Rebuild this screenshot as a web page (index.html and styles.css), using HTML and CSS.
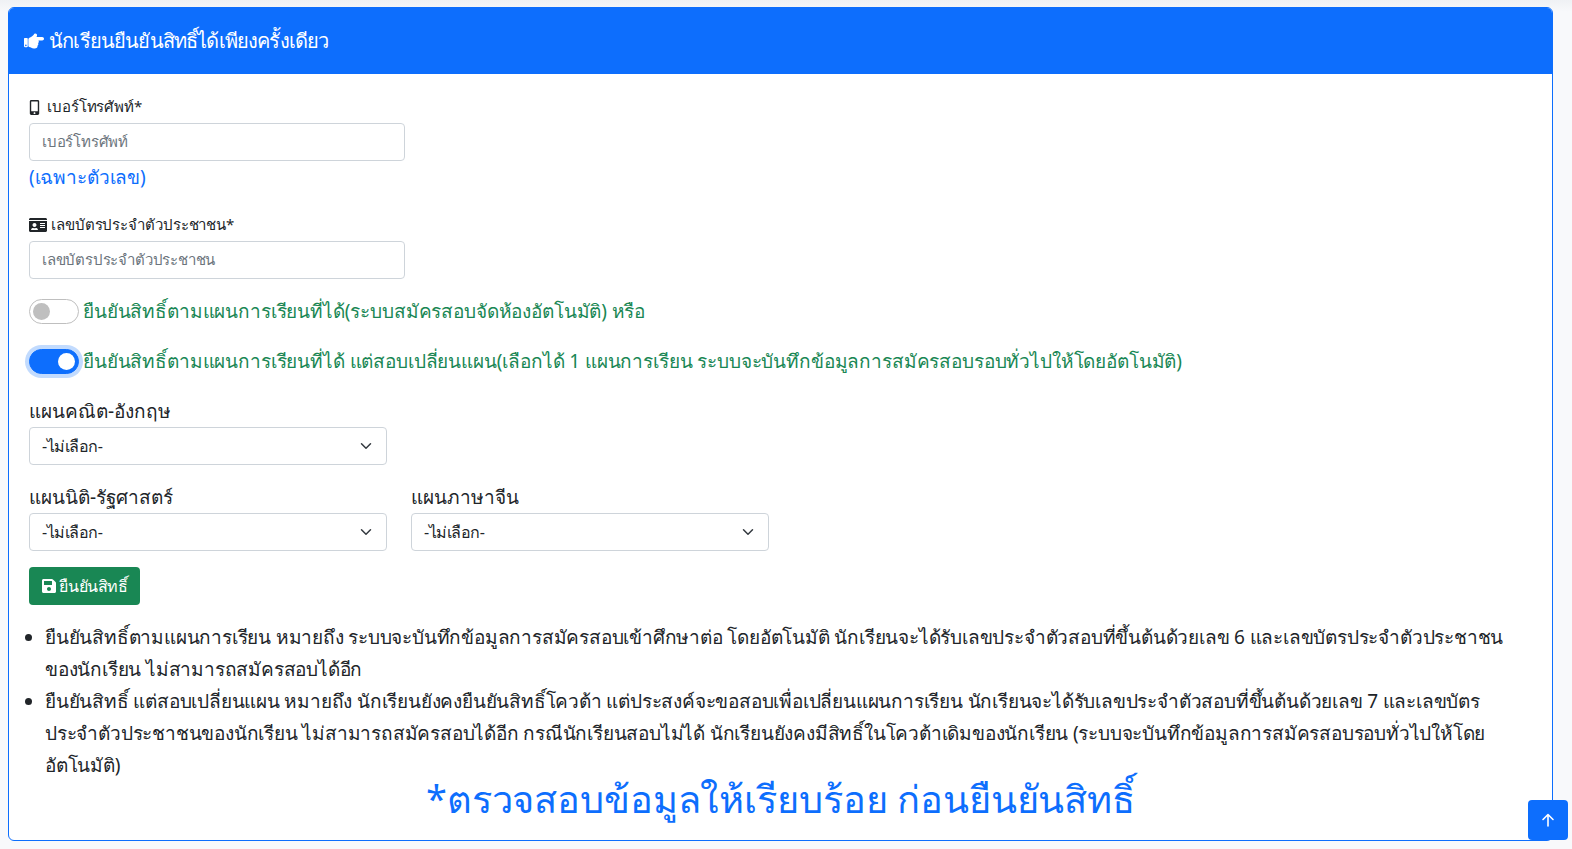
FILE: index.html
```html
<!DOCTYPE html>
<html lang="th">
<head>
<meta charset="utf-8">
<title>ยืนยันสิทธิ์</title>
<link rel="stylesheet" href="styles.css">
</head>
<body>
<div class="card">
  <div class="card-header">
    <svg class="ic-hand" viewBox="0 0 512 512"><path fill="currentColor" d="M512 199.652c0 23.625-20.65 43.826-44.8 43.826h-99.851c16.34 17.048 18.346 49.766-6.299 70.944 14.288 22.829 2.147 53.017-16.45 62.315C353.574 425.878 322.654 448 272 448c-2.746 0-13.276-.203-16-.195-61.971.168-76.894-31.065-123.731-38.315C120.596 407.683 112 397.599 112 385.786V214.261l.002-.001c.011-18.366 10.607-35.889 28.464-43.845 28.886-12.994 95.413-49.038 107.534-77.323 7.797-18.194 21.384-29.084 40-29.092 34.222-.014 57.752 35.098 44.119 66.908-3.583 8.359-8.312 16.67-14.153 24.918H467.2c23.624 0 44.8 20.976 44.8 43.826zM96 200v192c0 13.255-10.745 24-24 24H24c-13.255 0-24-10.745-24-24V200c0-13.255 10.745-24 24-24h48c13.255 0 24 10.745 24 24zM68 368c0-11.046-8.954-20-20-20s-20 8.954-20 20 8.954 20 20 20 20-8.954 20-20z"/></svg>
    <span>นักเรียนยืนยันสิทธิ์ได้เพียงครั้งเดียว</span>
  </div>
  <div class="card-body">
    <form class="form">
      <div class="field">
        <label class="label label-phone">
          <svg class="ic-phone" viewBox="0 0 320 512"><path fill="currentColor" d="M272 0H48C21.5 0 0 21.5 0 48v416c0 26.5 21.5 48 48 48h224c26.5 0 48-21.5 48-48V48c0-26.5-21.5-48-48-48zM160 480c-17.7 0-32-14.3-32-32s14.3-32 32-32 32 14.3 32 32-14.3 32-32 32zm112-108c0 6.6-5.4 12-12 12H60c-6.6 0-12-5.4-12-12V60c0-6.6 5.4-12 12-12h200c6.6 0 12 5.4 12 12v312z"/></svg>
          เบอร์โทรศัพท์*
        </label>
        <input class="control" type="text" placeholder="เบอร์โทรศัพท์">
        <div class="hint">(เฉพาะตัวเลข)</div>
      </div>
      <div class="field field-id">
        <label class="label">
          <svg class="ic-id" viewBox="0 0 576 512"><path fill="currentColor" d="M528 32H48C21.5 32 0 53.5 0 80v16h576V80c0-26.5-21.5-48-48-48zM0 432c0 26.5 21.5 48 48 48h480c26.5 0 48-21.5 48-48V128H0v304zm352-232c0-4.4 3.6-8 8-8h144c4.4 0 8 3.6 8 8v16c0 4.4-3.6 8-8 8H360c-4.4 0-8-3.6-8-8v-16zm0 64c0-4.4 3.6-8 8-8h144c4.4 0 8 3.6 8 8v16c0 4.4-3.6 8-8 8H360c-4.4 0-8-3.6-8-8v-16zm0 64c0-4.4 3.6-8 8-8h144c4.4 0 8 3.6 8 8v16c0 4.4-3.6 8-8 8H360c-4.4 0-8-3.6-8-8v-16zM176 192c35.3 0 64 28.7 64 64s-28.7 64-64 64-64-28.7-64-64 28.7-64 64-64zM67.1 396.2C75.5 370.5 99.6 352 128 352h8.2c12.3 5.1 25.7 8 39.8 8s27.6-2.9 39.8-8h8.2c28.4 0 52.5 18.5 60.9 44.2 3.2 9.9-5.2 19.8-15.6 19.8H82.7c-10.4 0-18.8-10-15.6-19.8z"/></svg>
          เลขบัตรประจำตัวประชาชน*
        </label>
        <input class="control" type="text" placeholder="เลขบัตรประจำตัวประชาชน">
      </div>
      <div class="switches">
        <div class="switch-row">
          <span class="switch"></span>
          <span class="switch-text">ยืนยันสิทธิ์ตามแผนการเรียนที่ได้(ระบบสมัครสอบจัดห้องอัตโนมัติ) หรือ</span>
        </div>
        <div class="switch-row">
          <span class="switch switch-on"></span>
          <span class="switch-text">ยืนยันสิทธิ์ตามแผนการเรียนที่ได้ แต่สอบเปลี่ยนแผน(เลือกได้ 1 แผนการเรียน ระบบจะบันทึกข้อมูลการสมัครสอบรอบทั่วไปให้โดยอัตโนมัติ)</span>
        </div>
      </div>
      <div class="plan-row">
        <div class="plan">
          <div class="plan-label">แผนคณิต-อังกฤษ</div>
          <div class="select">-ไม่เลือก-<svg class="chev" viewBox="0 0 16 16"><path fill="none" stroke="#343a40" stroke-linecap="round" stroke-linejoin="round" stroke-width="2" d="m2 5 6 6 6-6"/></svg></div>
        </div>
      </div>
      <div class="plan-row">
        <div class="plan">
          <div class="plan-label">แผนนิติ-รัฐศาสตร์</div>
          <div class="select">-ไม่เลือก-<svg class="chev" viewBox="0 0 16 16"><path fill="none" stroke="#343a40" stroke-linecap="round" stroke-linejoin="round" stroke-width="2" d="m2 5 6 6 6-6"/></svg></div>
        </div>
        <div class="plan">
          <div class="plan-label">แผนภาษาจีน</div>
          <div class="select">-ไม่เลือก-<svg class="chev" viewBox="0 0 16 16"><path fill="none" stroke="#343a40" stroke-linecap="round" stroke-linejoin="round" stroke-width="2" d="m2 5 6 6 6-6"/></svg></div>
        </div>
      </div>
      <div class="btn">
        <svg class="ic-save" viewBox="0 0 448 512"><path fill="currentColor" d="M433.941 129.941l-83.882-83.882A48 48 0 0 0 316.118 32H48C21.49 32 0 53.49 0 80v352c0 26.51 21.49 48 48 48h352c26.51 0 48-21.49 48-48V163.882a48 48 0 0 0-14.059-33.941zM224 416c-35.346 0-64-28.654-64-64 0-35.346 28.654-64 64-64s64 28.654 64 64c0 35.346-28.654 64-64 64zm96-304.52V212c0 6.627-5.373 12-12 12H76c-6.627 0-12-5.373-12-12V108c0-6.627 5.373-12 12-12h228.52c3.183 0 6.235 1.264 8.485 3.515l3.48 3.48A11.996 11.996 0 0 1 320 111.48z"/></svg>
        ยืนยันสิทธิ์
      </div>
    </form>
    <ul class="notes">
      <li>ยืนยันสิทธิ์ตามแผนการเรียน หมายถึง ระบบจะบันทึกข้อมูลการสมัครสอบเข้าศึกษาต่อ โดยอัตโนมัติ นักเรียนจะได้รับเลขประจำตัวสอบที่ขึ้นต้นด้วยเลข 6 และเลขบัตรประจำตัวประชาชนของนักเรียน ไม่สามารถสมัครสอบได้อีก</li>
      <li>ยืนยันสิทธิ์ แต่สอบเปลี่ยนแผน หมายถึง นักเรียนยังคงยืนยันสิทธิ์โควต้า แต่ประสงค์จะขอสอบเพื่อเปลี่ยนแผนการเรียน นักเรียนจะได้รับเลขประจำตัวสอบที่ขึ้นต้นด้วยเลข 7 และเลขบัตรประจำตัวประชาชนของนักเรียน ไม่สามารถสมัครสอบได้อีก กรณีนักเรียนสอบไม่ได้ นักเรียนยังคงมีสิทธิ์ในโควต้าเดิมของนักเรียน (ระบบจะบันทึกข้อมูลการสมัครสอบรอบทั่วไปให้โดยอัตโนมัติ)</li>
    </ul>
    <div class="warning">*ตรวจสอบข้อมูลให้เรียบร้อย ก่อนยืนยันสิทธิ์</div>
  </div>
</div>
<a class="top-btn"><svg viewBox="0 0 16 16"><path fill="none" stroke="currentColor" stroke-width="1.6" stroke-linecap="round" stroke-linejoin="round" d="M8 14V2.5M3 7.5l5-5 5 5"/></svg></a>
</body>
</html>
```
FILE: styles.css
```css
* { box-sizing: border-box; }
html, body { height: 100%; }
body {
  margin: 0;
  padding: 7px 19px 8px 8px;
  background: linear-gradient(#eff1f4 0, #f8f9fb 12px);
  font-family: "Noto Sans", "Noto Sans CJK SC", sans-serif;
  color: #212529;
  font-size: 16px;
  overflow: hidden;
}
.card {
  background: #fff;
  border: 1px solid #0d6efd;
  border-radius: 6px;
  height: 834px;
  overflow: hidden;
}
.card-header {
  background: #0d6efd;
  color: #fff;
  height: 66px;
  padding: 0 15px;
  display: flex;
  align-items: center;
  gap: 5px;
  font-size: 20px;
  letter-spacing: -0.83px;
}
.ic-hand { width: 20px; height: 20px; }
.card-body { padding: 20px 20px 0; }
.form { display: flex; flex-direction: column; }
.field { width: 376px; }
.label {
  display: flex;
  align-items: center;
  gap: 4px;
  font-size: 15px;
  height: 24px;
  padding-top: 2px;
  margin-bottom: 5px;
  letter-spacing: -0.1px;
}
.label-phone { gap: 7px; }
.ic-phone { width: 11px; height: 15px; }
.ic-id { width: 18px; height: 16px; }
.control {
  display: block;
  width: 100%;
  height: 38px;
  border: 1px solid #ced4da;
  border-radius: 4px;
  padding: 0 12px 2px;
  font: inherit;
  font-size: 15px;
  letter-spacing: -0.2px;
  background: #fff;
}
.control::placeholder { color: #6c757d; opacity: 1; }
.hint { color: #0d6efd; font-size: 19px; line-height: 32px; letter-spacing: -0.15px; margin-bottom: 2px; }
.field-id { margin-top: 17px; }
.switches { display: flex; flex-direction: column; gap: 17px; margin: 16px 0 1px; }
.switch-row { display: flex; align-items: center; gap: 4px; height: 33px; color: #198754; font-size: 19px; letter-spacing: -0.14px; }
.switch-text { margin-top: -1px; }
.switch { width: 50px; height: 25px; border: 1px solid #bfbfbf; border-radius: 13px; background: #fff; position: relative; flex: none; }
.switch::after { content: ""; position: absolute; left: 3px; top: 3px; width: 17px; height: 17px; border-radius: 50%; background: #bfbfbf; }
.switch-on { background: #0d6efd; border-color: #0d6efd; box-shadow: 0 0 0 4px rgba(13,110,253,.25); }
.switch-on::after { left: auto; right: 3px; background: #fff; }
.plan-row { display: flex; gap: 24px; margin-top: 18px; }
.plan { width: 358px; }
.plan-label { font-size: 19px; line-height: 28px; height: 30px; letter-spacing: 0; }
.select {
  height: 38px;
  border: 1px solid #ced4da;
  border-radius: 4px;
  padding: 0 12px;
  display: flex;
  align-items: center;
  justify-content: space-between;
  font-size: 16px;
  letter-spacing: -0.5px;
}
.chev { width: 16px; height: 12px; }
.btn {
  align-self: flex-start;
  margin-top: 16px;
  background: #198754;
  color: #fff;
  border-radius: 4px;
  height: 38px;
  width: 111px;
  padding-left: 1px;
  display: flex;
  align-items: center;
  justify-content: center;
  gap: 3px;
  font-size: 16px;
  letter-spacing: -0.35px;
}
.ic-save { width: 14px; height: 16px; }
.notes { margin: 16px 0 0; padding-left: 16px; font-size: 19px; line-height: 32px; letter-spacing: -0.2px; }
.warning { text-align: center; color: #0d6efd; font-size: 38px; line-height: 32px; letter-spacing: -0.12px; padding-top: 1px; }
.top-btn {
  position: fixed;
  right: 4px;
  bottom: 9px;
  width: 40px;
  height: 40px;
  background: #0d6efd;
  color: #fff;
  border-radius: 4px;
  display: flex;
  align-items: center;
  justify-content: center;
}
.top-btn svg { width: 16px; height: 16px; }
```
